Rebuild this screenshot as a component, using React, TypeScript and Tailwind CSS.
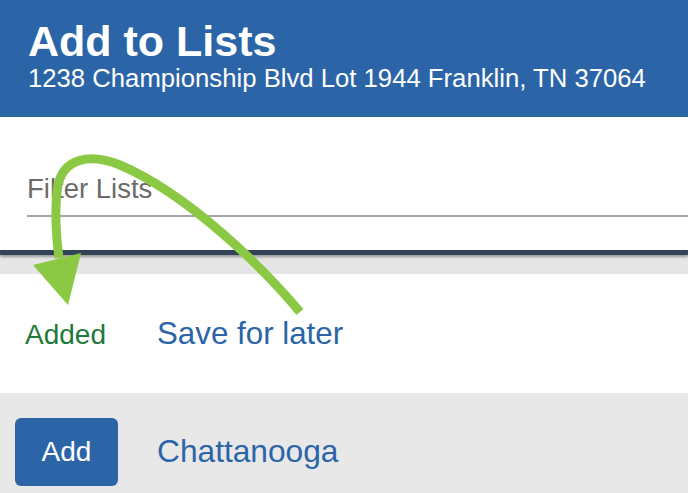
import React from "react";

export default function App() {
  return (
    <div
      className="relative w-[688px] h-[493px] overflow-hidden bg-white"
      style={{ fontFamily: '"Liberation Sans", Arial, Helvetica, sans-serif' }}
    >
      {/* Header */}
      <div className="h-[117px] bg-[#2b65a8] px-[28px] pt-[20px] text-white">
        <div className="text-[43px] leading-[43px] font-bold">Add to Lists</div>
        <div className="text-[25.7px] leading-[30px] whitespace-nowrap">
          1238 Championship Blvd Lot 1944 Franklin, TN 37064
        </div>
      </div>

      {/* Filter */}
      <div className="h-[133px] pl-[27px] pt-[56px]">
        <div className="border-b-2 border-[#a3a3a3] pb-[10px]">
          <div className="text-[27.5px] leading-[32px] text-[#6b6b6b]">Filter Lists</div>
        </div>
      </div>

      {/* Divider */}
      <div className="h-[5px] bg-[#344256] shadow-[0_2px_3px_rgba(0,0,0,0.35)] relative z-10" />
      <div className="h-[19px] bg-[#e6e6e6]" />

      {/* Status row */}
      <div className="h-[119px] px-[25px] pt-[42px] flex items-baseline">
        <div className="w-[132px] text-[28px] leading-[36px] text-[#1f7a3b]">Added</div>
        <div className="text-[31.3px] leading-[36px] text-[#2b65a8]">Save for later</div>
      </div>

      {/* List row */}
      <div className="h-[100px] bg-[#e8e8e8] pl-[15px] pt-[25px] flex items-start gap-[39px]">
        <div className="w-[103px] h-[68px] rounded-[6px] bg-[#2b65a8] flex items-center justify-center text-white text-[28px]">
          Add
        </div>
        <div className="h-[68px] flex items-center text-[31.7px] text-[#2b65a8]">Chattanooga</div>
      </div>

      {/* Annotation arrow */}
      <svg
        className="absolute inset-0 pointer-events-none z-20"
        width="688"
        height="493"
        viewBox="0 0 688 493"
      >
        <path
          d="M 300 312 C 265 270, 190 195, 120 165 C 90 153, 64 158, 58 185 C 54 210, 56 235, 59 258"
          fill="none"
          stroke="#8bc944"
          strokeWidth="9"
          strokeLinecap="butt"
        />
        <polygon points="33,265 81,253 68,305" fill="#8bc944" />
      </svg>
    </div>
  );
}
